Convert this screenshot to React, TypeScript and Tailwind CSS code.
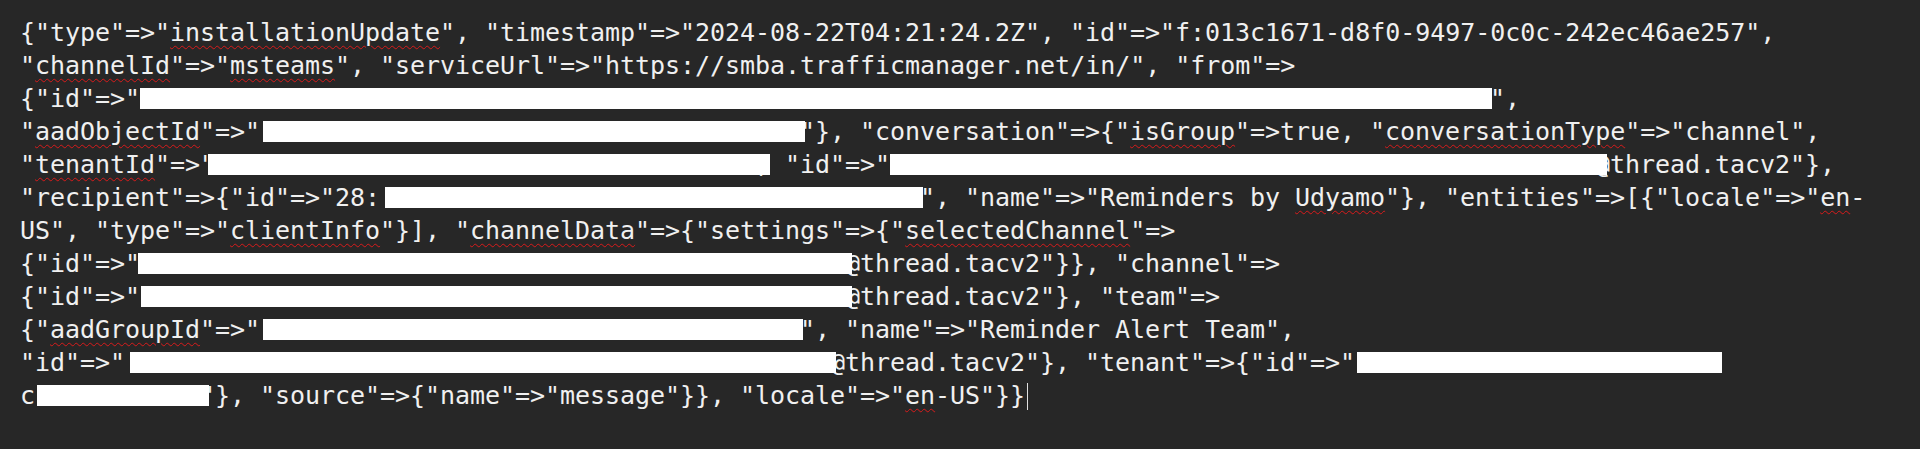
import type { ReactNode } from "react";

// spell-check squiggle under a word
function Sq({ children }: { children: ReactNode }) {
  return (
    <span className="underline decoration-wavy decoration-[#d81b1b] decoration-1 underline-offset-[4px]">
      {children}
    </span>
  );
}

// white redaction block
function Redact({ className }: { className: string }) {
  return <span className={`relative inline-block h-[21px] bg-white align-[-2px] ${className}`} />;
}

function Line({ children }: { children: ReactNode }) {
  return <div className="h-[33px] whitespace-pre leading-[33px]">{children}</div>;
}

export default function App() {
  return (
    <div className="h-screen w-full overflow-hidden bg-[#272727] pl-5 pt-[16px] font-['DejaVu_Sans_Mono','Liberation_Mono',monospace] text-[25px] tracking-[-0.05px] text-[#f0f0f0]">
      <Line>
        {'{"type"=>"'}
        <Sq>installationUpdate</Sq>
        {'", "timestamp"=>"2024-08-22T04:21:24.2Z", "id"=>"f:013c1671-d8f0-9497-0c0c-242ec46ae257",'}
      </Line>
      <Line>
        {'"'}
        <Sq>channelId</Sq>
        {'"=>"'}
        <Sq>msteams</Sq>
        {'", "serviceUrl"=>"https://smba.trafficmanager.net/in/", "from"=>'}
      </Line>
      <Line>
        {'{"id"=>"'}
        <Redact className="w-[1352px] -mr-[2px]" />
        {'",'}
      </Line>
      <Line>
        {'"'}
        <Sq>aadObjectId</Sq>
        {'"=>"'}
        <Redact className="ml-[3px] w-[542px] -mr-[5px]" />
        {'"}, "conversation"=>{"'}
        <Sq>isGroup</Sq>
        {'"=>true, "'}
        <Sq>conversationType</Sq>
        {'"=>"channel",'}
      </Line>
      <Line>
        {'"'}
        <Sq>tenantId</Sq>
        {'"=>"'}
        <Redact className="-ml-[7px] w-[562px] -mr-[15px]" />
        {', "id"=>"'}
        <Redact className="w-[717px] -mr-[12px]" />
        {'@thread.tacv2"},'}
      </Line>
      <Line>
        {'"recipient"=>{"id"=>"28:'}
        <Redact className="ml-[5px] w-[538px] -mr-[3px]" />
        {'", "name"=>"Reminders by '}
        <Sq>Udyamo</Sq>
        {'"}, "entities"=>[{"locale"=>"'}
        <Sq>en</Sq>
        {"-"}
      </Line>
      <Line>
        {'US", "type"=>"'}
        <Sq>clientInfo</Sq>
        {'"}], "'}
        <Sq>channelData</Sq>
        {'"=>{"settings"=>{"'}
        <Sq>selectedChannel</Sq>
        {'"=>'}
      </Line>
      <Line>
        {'{"id"=>"'}
        <Redact className="-ml-[2px] w-[714px] -mr-[7px]" />
        {'@thread.tacv2"}}, "channel"=>'}
      </Line>
      <Line>
        {'{"id"=>"'}
        <Redact className="ml-[1px] w-[711px] -mr-[7px]" />
        {'@thread.tacv2"}, "team"=>'}
      </Line>
      <Line>
        {'{"'}
        <Sq>aadGroupId</Sq>
        {'"=>"'}
        <Redact className="ml-[3px] w-[540px] -mr-[3px]" />
        {'", "name"=>"Reminder Alert Team",'}
      </Line>
      <Line>
        {'"id"=>"'}
        <Redact className="ml-[5px] w-[706px] -mr-[6px]" />
        {'@thread.tacv2"}, "tenant"=>{"id"=>"'}
        <Redact className="ml-[2px] w-[365px]" />
      </Line>
      <Line>
        {"c"}
        <Redact className="ml-[2px] w-[172px] -mr-[9px]" />
        {'"}, "source"=>{"name"=>"message"}}, "locale"=>"'}
        <Sq>en</Sq>
        {'-US"}}'}
        <span className="ml-[2px] inline-block h-[27px] w-px bg-[#e0e0e0] align-[-6px]" />
      </Line>
    </div>
  );
}
